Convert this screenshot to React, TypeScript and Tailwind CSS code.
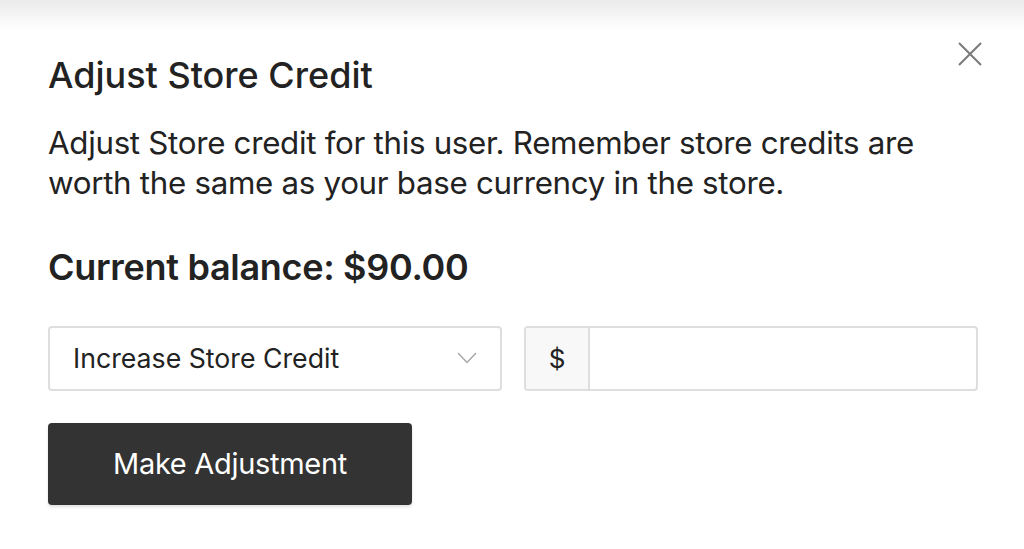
import React, { useState } from 'react';

export default function App() {
  const [mode, setMode] = useState('increase');
  const [amount, setAmount] = useState('');

  return (
    <div className="min-h-[549px] bg-white text-[#222] font-['Inter','Liberation_Sans',sans-serif]">
      <div className="h-[30px] bg-gradient-to-b from-[#ebebeb] to-white" />
      <div className="relative px-[48px] pt-[23px]">
        <button className="absolute right-[42px] top-[12px] w-[24px] h-[24px] text-[#7a7a7a]">
          <svg viewBox="0 0 24 24" className="w-[24px] h-[24px]" fill="none" stroke="currentColor" strokeWidth="2">
            <path d="M1 1 L23 23 M23 1 L1 23" />
          </svg>
        </button>
        <h2 className="text-[36px] leading-[44px] font-medium tracking-[0px]">Adjust Store Credit</h2>
        <p className="mt-[26px] text-[31.3px] leading-[40px] text-[#222] w-[900px] tracking-[-0.3px]">
          Adjust Store credit for this user. Remember store credits are worth the same as your base currency in the store.
        </p>
        <div className="mt-[42px] text-[36px] leading-[44px] font-semibold tracking-[-0.3px]">Current balance: $90.00</div>
        <div className="mt-[37px] flex gap-[22px] w-[930px]">
          <div className="relative w-[454px] h-[65px]">
            <select
              value={mode}
              onChange={(e) => setMode(e.target.value)}
              className="appearance-none w-full h-full border-2 border-[#dedede] rounded-[4px] bg-white pl-[23px] text-[26.7px] text-[#222] outline-none"
            >
              <option value="increase">Increase Store Credit</option>
              <option value="decrease">Decrease Store Credit</option>
            </select>
            <svg viewBox="0 0 20 12" className="absolute right-[25px] top-[26px] w-[20px] h-[12px] pointer-events-none" fill="none" stroke="#a8a8a8" strokeWidth="1.5">
              <path d="M1 1 L10 10.5 L19 1" />
            </svg>
          </div>
          <div className="flex flex-1 h-[65px] border-2 border-[#dedede] rounded-[4px] overflow-hidden">
            <span className="w-[64px] shrink-0 flex items-center justify-center bg-[#f8f8f8] border-r-2 border-[#dedede] text-[26px] text-[#222]">$</span>
            <input
              value={amount}
              onChange={(e) => setAmount(e.target.value)}
              className="flex-1 min-w-0 px-[16px] text-[26px] outline-none"
            />
          </div>
        </div>
        <button className="mt-[32px] w-[364px] h-[82px] bg-[#333333] text-white rounded-[4px] text-[29px] tracking-[-0.3px] shadow-[0_2px_3px_rgba(0,0,0,0.12)]">
          Make Adjustment
        </button>
      </div>
    </div>
  );
}
